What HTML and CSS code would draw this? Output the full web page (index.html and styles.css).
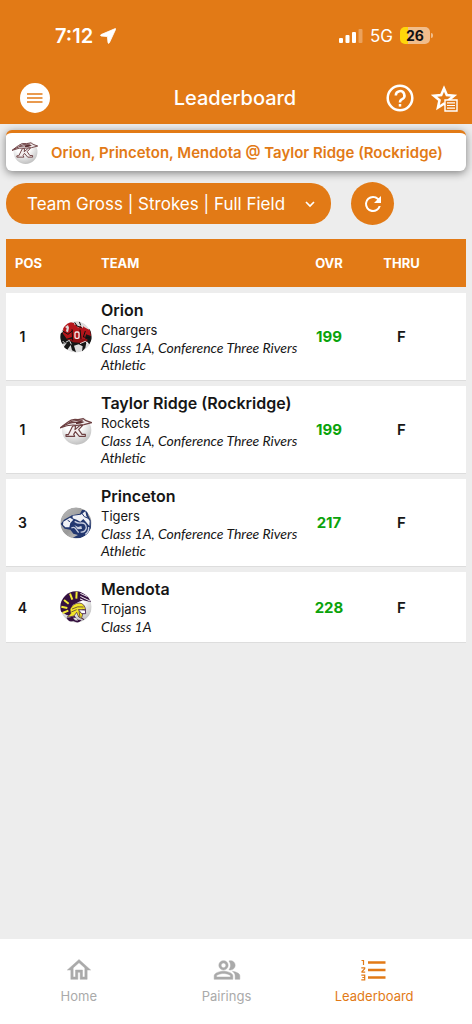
FILE: index.html
```html
<!DOCTYPE html>
<html lang="en">
<head>
<meta charset="utf-8">
<meta name="viewport" content="width=device-width, initial-scale=1">
<title>Leaderboard</title>
<link rel="stylesheet" href="styles.css">
</head>
<body>
<svg class="sprite" aria-hidden="true">
  <defs>
    <radialGradient id="ball" cx="40%" cy="25%" r="80%"><stop offset="0.4" stop-color="#fff"/><stop offset="1" stop-color="#bbb"/></radialGradient>
    <linearGradient id="steel" x1="0" x2="1" y1="0" y2="1"><stop offset="0" stop-color="#bbb"/><stop offset="0.5" stop-color="#999"/><stop offset="1" stop-color="#ddd"/></linearGradient>
    <clipPath id="disc"><circle cx="48" cy="48" r="47"/></clipPath>
    <symbol id="rocket" viewBox="0 0 96 96">
      <circle cx="50" cy="48" r="44" fill="url(#ball)"/>
      <g fill="#f3eeee" stroke="#6d4042" stroke-width="3.500" stroke-linejoin="round">
        <path d="M0 42 24 24Q36 13 54 17L70 14 78 20 95 26 72 32 50 34Q28 30 0 42Z"/>
        <path d="M6 38Q28 24 50 25M26 27Q40 17 68 19" fill="none"/>
        <path d="M18 67V62H25L38 36 47 35 45 47 60 34H68L56 47 66 61H76V67H58L46 53 41 61 44 67Z"/>
      </g>
      <path d="M48 24Q60 18 74 24Q60 31 48 30Z" fill="#5d3032"/>
    </symbol>
  </defs>
</svg>
<header class="top">
  <div class="status">
    <div class="status-group">
      <span class="time">7:12</span>
      <svg width="16" height="16" viewBox="0 0 16 16" fill="#fff" stroke="#fff" stroke-width=".8" stroke-linejoin="round"><path d="M15.200.6Q16 .4 15.600 1.400L9.400 14.800Q8.600 16 8 14.800L7.400 8.600 1 8Q-.2 7.400 1 6.600Z"/></svg>
    </div>
    <div class="status-group">
      <svg width="24" height="16" viewBox="0 0 24 16" fill="#fff"><rect y="10" width="4" height="5" rx="1"/><rect x="6.500" y="7" width="4" height="8" rx="1"/><rect x="13" y="4" width="4" height="11" rx="1"/><rect x="19.500" y="1" width="4" height="14" rx="1" opacity=".3"/></svg>
      <span class="network">5G</span>
      <span class="battery">26</span>
    </div>
  </div>
  <div class="appbar">
    <button class="menu" aria-label="Menu"><svg width="16" height="12" viewBox="0 0 16 12" stroke="#e27a16" stroke-width="1.600"><path d="M0 2H15.500M0 6H15.500M0 10H15.500"/></svg></button>
    <h1>Leaderboard</h1>
    <div class="actions">
      <button class="plain" aria-label="Help"><svg width="28" height="28" viewBox="0 0 28 28" fill="none" stroke="#fff" stroke-width="2.500"><circle cx="14" cy="14" r="12.300"/><path d="M9.800 11.500a4.300 4.300 0 1 1 6.400 3.700Q14 16.200 14 18.400"/><path d="M14 20v2.600"/></svg></button>
      <button class="plain" aria-label="Favorites"><svg width="28" height="28" viewBox="0 0 28 28" fill="none" stroke="#fff"><path stroke-width="2.600" d="M14 4.500 16.800 11 24 11.700 18.500 16.300 20 23.500 14 19.700 8 23.500 9.500 16.300 4 11.700 11.200 11Z"/><path fill="#e27a16" stroke-width="1.400" d="M15 16H27V27H15Z"/><path stroke-width="1.200" d="M17 18.800H25M17 21.500H25M17 24.200H25"/></svg></button>
    </div>
  </div>
</header>
<main>
  <section class="event">
    <svg class="event-logo" viewBox="0 0 96 96"><use href="#rocket"/></svg>
    <h2>Orion, Princeton, Mendota @ Taylor Ridge (Rockridge)</h2>
  </section>
  <div class="filters">
    <div class="picker">
      <select aria-label="Leaderboard view"><option>Team Gross | Strokes | Full Field</option></select>
      <svg width="10" height="7" viewBox="0 0 10 7" fill="none" stroke="#fff" stroke-width="1.700"><path d="M1 1 5 5 9 1"/></svg>
    </div>
    <button class="refresh" aria-label="Refresh"><svg width="24" height="24" viewBox="0 0 24 24" fill="#fff"><path d="M17.650 6.350A7.958 7.958 0 0 0 12 4a8 8 0 1 0 7.730 10h-2.080A6 6 0 1 1 12 6c1.660 0 3.140.69 4.220 1.780L13 11h7V4z"/></svg></button>
  </div>
  <table>
    <colgroup><col class="c-pos"><col class="c-logo"><col><col class="c-ovr"><col class="c-thru"></colgroup>
    <thead><tr><th class="left">POS</th><th></th><th class="team">TEAM</th><th>OVR</th><th class="thru">THRU</th></tr></thead>
    <tbody>
      <tr><td class="pos">1</td><td>
        <svg class="logo" viewBox="0 0 96 96"><g clip-path="url(#disc)"><circle cx="48" cy="48" r="47" fill="#ddd"/>
          <path fill="#161616" d="M0 38 14 30 28 40 78 36 93 18 96 54 88 70 80 60 76 80 66 92 68 76 56 70 42 74 48 94 36 88 32 72 22 86 10 80 20 66 6 68 0 54Z"/>
          <path fill="#b4151a" d="M10 16 26 2 44 7 60 6 72 18 90 28 93 45 78 40 75 58 38 60 36 48 20 53 9 38Z"/>
          <path fill="#8d1014" d="M20 54H82V60L64 66 40 64Z"/>
          <path fill="#ddd" d="M42 4 52 0 70 9 69 22 61 14 54 20 49 10 44 13ZM15 18 24 12 27 20 24 34 18 31 20 22Z"/>
          <path fill="none" stroke="#111" stroke-width="3" d="M44 4 51 15 65 20M58 2 62 13M8 30 24 40 38 29M76 30 70 48 90 50M36 25 38 58M60 26 63 54"/>
          <rect x="45" y="33" width="12" height="19" rx="4" fill="none" stroke="#eee" stroke-width="4"/>
          <path fill="none" stroke="#fff" stroke-width="2.500" d="M17 64 28 58 34 70M60 68 76 61 84 69M8 60 14 66"/>
        </g></svg></td>
        <td class="team"><strong>Orion</strong><span>Chargers</span><em>Class 1A, Conference Three Rivers Athletic</em></td><td class="score">199</td><td class="thru">F</td></tr>
      <tr><td class="pos">1</td><td><svg class="logo" viewBox="0 0 96 96"><use href="#rocket"/></svg></td>
        <td class="team"><strong>Taylor Ridge (Rockridge)</strong><span>Rockets</span><em>Class 1A, Conference Three Rivers Athletic</em></td><td class="score">199</td><td class="thru">F</td></tr>
      <tr><td class="pos">3</td><td>
        <svg class="logo" viewBox="0 0 96 96"><g clip-path="url(#disc)"><circle cx="48" cy="48" r="47" fill="url(#steel)"/>
          <path fill="#22376f" d="M2 51 12 38 36 25 60 20 66 9 82 10 84 24 92 40 93 66 82 84 60 94 38 92 54 84 40 80 31 68 14 65Z"/>
          <path fill="#f0f1f6" d="M10 44 30 32 40 38 31 48 28 61 16 61 9 54ZM38 26 62 23 76 13 79 27 89 42 88 57 78 45 70 36 61 44 50 38 38 34Z"/>
          <path fill="none" stroke="#c6ccdf" stroke-width="4" d="M44 43Q54 50 64 48 78 47 79 63 75 77 62 75M34 63Q44 58 49 68L56 77M86 60Q87 75 76 82"/>
          <path fill="none" stroke="#22376f" stroke-width="3" d="M65 18 73 29 85 34M23 40 30 44"/>
          <path fill="#cbd0df" d="M43 54 54 60 64 57 66 66 53 67Z"/>
        </g></svg></td>
        <td class="team"><strong>Princeton</strong><span>Tigers</span><em>Class 1A, Conference Three Rivers Athletic</em></td><td class="score">217</td><td class="thru">F</td></tr>
      <tr><td class="pos">4</td><td>
        <svg class="logo" viewBox="0 0 96 96"><g clip-path="url(#disc)"><circle cx="48" cy="48" r="47" fill="url(#ball)"/>
          <path fill="#351040" d="M0 20 24 0 58 0 92 20 94 34 70 28 57 32 38 42 31 60 36 76 20 72 0 60Z"/>
          <path fill="none" stroke="#f2e934" stroke-width="6" d="M30 8 37 26M50 2 49 23M12 27 26 38M4 47 22 51M8 66 25 59"/>
          <path fill="none" stroke="#f4f0f4" stroke-width="3" d="M61 7 83 17M61 16 90 30M60 24 70 28"/>
          <path fill="#f1e62a" stroke="#351040" stroke-width="2" d="M30 54Q40 36 58 36 74 37 77 57L68 55 61 61 69 66 65 80 72 86 56 78 50 64 42 75 21 79 32 68Z"/>
          <path fill="#fff" stroke="#351040" stroke-width="2.500" d="M55 56 76 57 77 68 65 68Z"/>
          <path fill="none" stroke="#351040" stroke-width="2" d="M36 54Q53 44 71 48M34 63 50 56M57 61 60 78"/>
          <path fill="#351040" d="M20 82 44 75 54 86 65 87 54 96 40 90 28 92Z"/>
          <path fill="#ddd" d="M39 80 49 80 54 89 45 88Z"/>
        </g></svg></td>
        <td class="team"><strong>Mendota</strong><span>Trojans</span><em>Class 1A</em></td><td class="score">228</td><td class="thru">F</td></tr>
    </tbody>
  </table>
</main>
<nav>
  <a href="#home"><svg width="28" height="28" viewBox="0 0 24 24" fill="currentColor" stroke="currentColor" stroke-width=".4"><path d="M12 5.690l5 4.500V18h-2v-6H9v6H7v-7.810l5-4.500M12 3L2 12h3v8h6v-6h2v6h6v-8h3L12 3z"/></svg><span>Home</span></a>
  <a href="#pairings"><svg width="28" height="28" viewBox="0 0 24 24" fill="currentColor" stroke="currentColor" stroke-width=".4"><path d="M16.670 13.130C18.040 14.060 19 15.320 19 17v3h4v-3c0-2.180-3.570-3.470-6.330-3.870zM15 12c2.210 0 4-1.790 4-4s-1.790-4-4-4c-.47 0-.91.1-1.330.24C14.500 5.270 15 6.580 15 8s-.5 2.730-1.330 3.760c.42.14.86.24 1.330.24zM9 12c2.210 0 4-1.790 4-4s-1.790-4-4-4-4 1.790-4 4 1.790 4 4 4zm0-6c1.100 0 2 .9 2 2s-.9 2-2 2-2-.9-2-2 .9-2 2-2zM9 13c-2.670 0-8 1.340-8 4v3h16v-3c0-2.660-5.330-4-8-4zm6 5H3v-.99C3.200 16.290 6.300 15 9 15s5.800 1.290 6 2v1z"/></svg><span>Pairings</span></a>
  <a href="#leaderboard" class="active" aria-current="page"><svg width="28" height="28" viewBox="0 0 28 28" fill="none" stroke="currentColor"><path stroke-width="2.600" d="M8 6.500H25.500M8 14H25.500M8 21.500H25.500"/><path stroke-width="1.200" d="M1.500 4.500H3.500V9M1.300 11.900H4.700V12.800L2 15.600V16.200H5.200M1.300 19.200H4.700V23.800H1.300M2.300 21.500H4.700"/></svg><span>Leaderboard</span></a>
</nav>
</body>
</html>
```
FILE: styles.css
```css
* { box-sizing: border-box; }
body {
  margin: 0;
  min-height: 100vh;
  display: flex;
  flex-direction: column;
  background: #ededed;
  color: #161616;
  font-family: Inter, "Liberation Sans", sans-serif;
}
svg { display: block; }
button { padding: 0; border: 0; cursor: pointer; }
.sprite { position: absolute; width: 0; height: 0; }

.top { background: #e27a16; color: #fff; }
.status {
  height: 71px;
  padding: 0 40px 0 55px;
  display: flex;
  align-items: center;
  justify-content: space-between;
}
.status-group { display: flex; align-items: center; gap: 7px; }
.time { font-size: 20px; font-weight: 600; }
.network { font-size: 17px; }
.battery {
  position: relative;
  width: 30px;
  margin-right: 2px;
  border-radius: 5px;
  background: linear-gradient(90deg, #ffd60a 26%, #f1bd8b 26%);
  color: #111;
  font-size: 14px;
  font-weight: 700;
  line-height: 17px;
  text-align: center;
}
.battery::after {
  content: "";
  position: absolute;
  left: 31px;
  top: 6px;
  width: 2px;
  height: 5px;
  border-radius: 0 2px 2px 0;
  background: #f1bd8b;
}
.appbar {
  height: 53px;
  padding: 0 14px 0 20px;
  display: grid;
  grid-template-columns: 72px 1fr 80px;
  align-items: center;
}
.menu {
  width: 30px;
  height: 30px;
  border-radius: 50%;
  background: #fff;
  display: grid;
  place-items: center;
}
.appbar h1 { margin: 0; font-size: 20px; font-weight: 500; text-align: center; }
.actions { display: flex; justify-content: flex-end; gap: 16px; }
.plain { background: none; }

main { flex: 1; padding: 6px 6px 0; }
.event {
  height: 41px;
  padding: 0 6px;
  display: flex;
  align-items: center;
  gap: 13px;
  border-top: 3px solid #e27a16;
  border-radius: 6px;
  background: #fff;
  box-shadow: 0 2px 8px #0007;
}
.event-logo { width: 26px; height: 26px; flex: none; }
.event h2 { margin: 0; color: #e27a16; font-size: 15px; font-weight: 600; white-space: nowrap; }

.filters { margin-top: 11px; display: flex; align-items: center; gap: 20px; }
.picker { position: relative; width: 325px; }
.picker select {
  width: 100%;
  height: 41px;
  padding: 0 21px;
  appearance: none;
  border: 0;
  border-radius: 20px;
  background: #e27a16;
  color: #fff;
  font: 400 17px Inter, "Liberation Sans", sans-serif;
}
.picker svg { position: absolute; right: 16px; top: 18px; pointer-events: none; }
.refresh {
  width: 43px;
  height: 43px;
  border-radius: 50%;
  background: #e27a16;
  display: grid;
  place-items: center;
}

table {
  width: 100%;
  margin-top: 8px;
  table-layout: fixed;
  border-collapse: separate;
  border-spacing: 0 6px;
}
.c-pos { width: 47px; }
.c-logo { width: 46px; }
.c-ovr { width: 48px; }
.c-thru { width: 113px; }
th { height: 48px; padding: 0; background: #e27a16; color: #fff; font-size: 13px; font-weight: 700; }
td { padding: 0; background: #fff; box-shadow: 0 1px 0 #ddd; text-align: center; font-size: 15px; font-weight: 600; }
th.left { padding-left: 9px; text-align: left; }
td.pos { padding-right: 14px; font-size: 14px; }
.logo { width: 32px; height: 32px; margin: 0 auto; }
.team { padding-left: 2px; text-align: left; }
td.team { padding-top: 6px; padding-bottom: 7px; font-weight: 400; }
.team strong, .team span, .team em { display: block; }
.team strong { font-size: 16px; font-weight: 600; line-height: 22px; }
.team span { font-size: 13px; line-height: 18px; }
.team em { font-family: Lato, "Open Sans", sans-serif; font-size: 14px; line-height: 17px; }
td.score { color: #0ba30b; font-weight: 700; }
.thru { padding-right: 16px; }

nav { height: 85px; padding: 17px 24px 0 5px; display: flex; background: #fff; }
nav a {
  flex: 1;
  display: flex;
  flex-direction: column;
  align-items: center;
  gap: 3px;
  color: #aaa;
  font-size: 13px;
  line-height: 18px;
  text-decoration: none;
}
nav a.active { color: #e27a16; }
```
